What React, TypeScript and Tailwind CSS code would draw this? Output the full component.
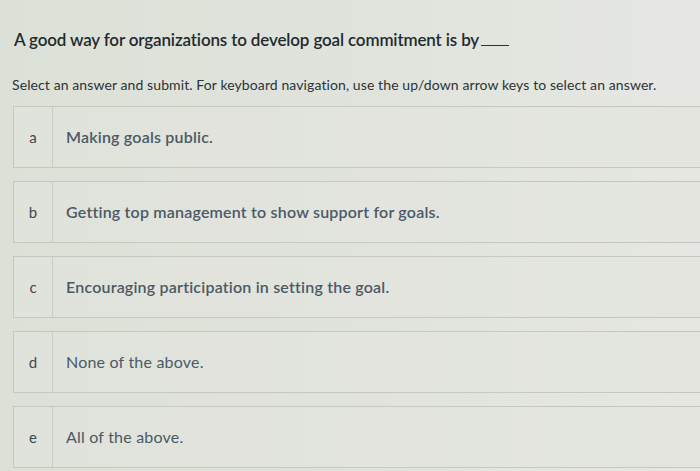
const answers = [
  { key: "a", text: "Making goals public.", weight: "font-semibold" },
  { key: "b", text: "Getting top management to show support for goals.", weight: "font-semibold" },
  { key: "c", text: "Encouraging participation in setting the goal.", weight: "font-semibold" },
  { key: "d", text: "None of the above.", weight: "font-normal" },
  { key: "e", text: "All of the above.", weight: "font-normal" },
];

export default function App() {
  return (
    <div
      className="w-[700px] h-[471px] overflow-hidden bg-gradient-to-r from-[#dce1d7] via-[#e0e3dc] to-[#e6e7e3] pt-[28px]"
      style={{ fontFamily: "Lato, 'Open Sans', sans-serif" }}
    >
      <h1 className="pl-[14px] text-[17px] font-semibold tracking-[-0.15px] text-[#1f2a2e] leading-[24px]">
        A good way for organizations to develop goal commitment is by
        <span className="inline-block w-[28px] border-b border-[#2a3236] ml-[2px]" />
      </h1>
      <p className="mt-[24px] pl-[12px] text-[14px] tracking-[0.1px] text-[#2b3438] leading-[18px]">
        Select an answer and submit. For keyboard navigation, use the up/down arrow keys to select an answer.
      </p>
      <div className="mt-[12px] ml-[13px] flex flex-col gap-[13px]">
        {answers.map((a) => (
          <div
            key={a.key}
            className="flex h-[62px] w-[720px] border border-[#c3c8c2] bg-[#e2e5de]/60"
          >
            <div className="w-[39px] flex items-center justify-center border-r border-[#c9cdc6] text-[15px] text-[#3d4a52]">
              {a.key}
            </div>
            <div className={`flex items-center pl-[13px] text-[16px] tracking-[0.2px] text-[#4b5a66] ${a.weight}`}>
              {a.text}
            </div>
          </div>
        ))}
      </div>
    </div>
  );
}
